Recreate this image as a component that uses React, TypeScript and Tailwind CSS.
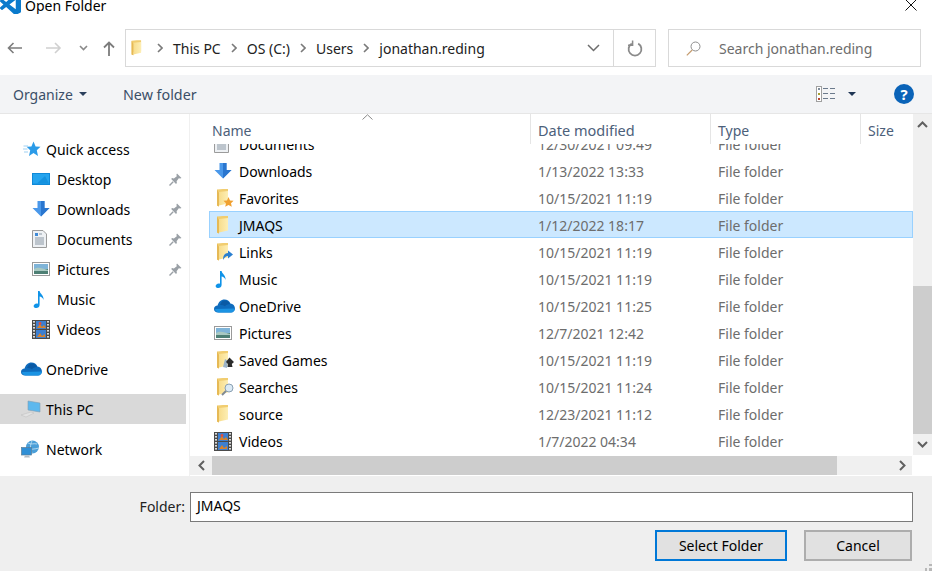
import type { ReactNode } from "react";

const font = { fontFamily: '"Noto Sans", "Open Sans", sans-serif' };

function FolderIcon({ overlay }: { overlay?: ReactNode }) {
  return (
    <svg width="22" height="20" viewBox="0 0 22 20">
      <defs>
        <linearGradient id="folderFront" x1="0" y1="0" x2="1" y2="0">
          <stop offset="0" stopColor="#f8dd8c" />
          <stop offset="1" stopColor="#fdeeb4" />
        </linearGradient>
      </defs>
      <path d="M3 1.5 L9 1 L14 1 L14 14 L5 15 L5 18.5 L3 17.5 Z" fill="#f1cd70" />
      <path d="M5 4 L14 3 L14 15.5 L5 17.5 Z" fill="url(#folderFront)" />
      <path d="M3 1.5 L3 17.5 L5 18.5 L5 5 Z" fill="#e6b955" />
      {overlay}
    </svg>
  );
}

function DownloadIcon() {
  return (
    <svg width="18" height="18" viewBox="0 0 18 18">
      <path d="M5.5 1 H12.5 V8 H17.5 L9 16.5 L0.5 8 H5.5 Z" fill="#4a98ea" />
      <path d="M9 1 H12.5 V8 H17.5 L9 16.5 Z" fill="#2a76cf" />
    </svg>
  );
}

function MusicIcon() {
  return (
    <svg width="14" height="19" viewBox="0 0 14 19">
      <path d="M6 1 H7.6 C8 4 12 5 11.5 10 C11 8 9 6.8 7.6 6.6 V15 C7.6 17.2 5.5 18.4 3.5 18 C1.5 17.6 1 15.6 2.4 14.4 C3.4 13.5 5 13.3 6 13.8 Z" fill="#0f93e8" />
    </svg>
  );
}

function PicturesIcon() {
  return (
    <svg width="18" height="14" viewBox="0 0 18 14">
      <rect x="0.5" y="0.5" width="17" height="13" fill="#fff" stroke="#9a9a9a" />
      <rect x="2" y="2" width="14" height="5" fill="#7fb4d8" />
      <rect x="2" y="7" width="14" height="5" fill="#4d7f74" />
      <path d="M2 7 C6 4.5 10 6 16 8 V9 H2 Z" fill="#a9c9c2" />
    </svg>
  );
}

function VideosIcon() {
  return (
    <svg width="18" height="19" viewBox="0 0 18 19">
      <rect x="0" y="0" width="18" height="19" fill="#4a4a4a" />
      <rect x="4" y="1" width="10" height="8" fill="#3d7fd0" />
      <rect x="4" y="10" width="10" height="8" fill="#3d7fd0" />
      <path d="M5 8 L8 4 L10 7 L12 5 L14 8 Z M5 17 L8 13 L10 16 L13 14 V17 Z" fill="#d9822b" />
      <circle cx="8" cy="3.5" r="1.4" fill="#e34f3c" />
      {[1, 4, 7, 10, 13, 16].map((y) => (
        <g key={y}>
          <rect x="1" y={y} width="2" height="1.6" fill="#dcdcdc" />
          <rect x="15" y={y} width="2" height="1.6" fill="#dcdcdc" />
        </g>
      ))}
    </svg>
  );
}

function CloudIcon() {
  return (
    <svg width="21" height="14" viewBox="0 0 21 14">
      <path d="M4 13.5 C1.5 13.5 0 12 0 10 C0 8 1.6 6.6 3.6 6.6 C4.4 3 7 0.5 10.5 0.5 C13.2 0.5 15.4 2 16.4 4.6 C19 4.8 21 7 21 9.6 C21 12 19.2 13.5 17 13.5 Z" fill="#0f6cbd" />
      <path d="M6 6 C7 3 9 1.6 11 1.6 C13.5 1.6 15 3 16 5 C13.6 5 12 6 11 7.2 C9.6 6.2 7.8 5.8 6 6 Z" fill="#0a5aa5" />
      <path d="M5 13.5 C3 13.5 1 12 1 10 L21 9.6 C21 12 19 13.5 17 13.5 Z" fill="#1b93e3" />
    </svg>
  );
}

function PinIcon() {
  return (
    <svg width="13" height="13" viewBox="0 0 13 13">
      <path d="M8 0.5 L12.5 5 L11.2 5.6 L9.8 5.2 L7.6 8.2 L7.9 10 L7 10.9 L2.2 6 L3 5.1 L4.9 5.4 L7.8 3.2 L7.4 1.8 Z" fill="#9aa0a6" />
      <path d="M4.2 8.8 L0.5 12.5" stroke="#9aa0a6" strokeWidth="1.4" />
    </svg>
  );
}

function StarIcon() {
  return (
    <svg width="18" height="16" viewBox="0 0 18 16">
      <path d="M10.5 0.5 L12.6 5.4 L17.5 5.8 L13.8 9.2 L15 15 L10.5 12 L6 15 L7.2 9.2 L3.6 5.8 L8.4 5.4 Z" fill="#2b9be8" />
      <path d="M0.5 5 H5 M0 8 H4.5 M1 11 H5" stroke="#9fd0f2" strokeWidth="1" />
    </svg>
  );
}

function DesktopIcon() {
  return (
    <svg width="18" height="14" viewBox="0 0 18 14">
      <rect x="0" y="1" width="18" height="12" fill="#0f89d8" />
      <rect x="1" y="2" width="16" height="9.6" fill="#25a4ee" />
      <path d="M5 11.6 L13 4 L17 11.6 Z" fill="#1592df" />
    </svg>
  );
}

function DocumentsIcon() {
  return (
    <svg width="15" height="18" viewBox="0 0 15 18">
      <path d="M0.5 0.5 H11 L14.5 4 V17.5 H0.5 Z" fill="#eef1f4" stroke="#9b9b9b" />
      <path d="M3 3 H6 V6 H3 Z" fill="#3f8ad6" />
      <path d="M7 4 H10 M3 8 H12 M3 10 H12 M3 12 H12 M3 14 H12" stroke="#8b98a5" />
    </svg>
  );
}

function ThisPcIcon() {
  return (
    <svg width="20" height="18" viewBox="0 0 20 18">
      <path d="M7 1 L19 3 V12 L7 10 Z" fill="#5db8ee" stroke="#7f9db3" strokeWidth="0.6" />
      <path d="M0 15 L10 12 L13 13 L5 17 Z" fill="#e2e2e2" stroke="#bdbdbd" strokeWidth="0.5" />
    </svg>
  );
}

function NetworkIcon() {
  return (
    <svg width="19" height="19" viewBox="0 0 19 19">
      <circle cx="11.5" cy="7" r="6.5" fill="#4b9fd8" />
      <path d="M7 3 C10 5 13 3 16 4 M6 8 C9 10 14 9 18 8 M11 1 C9 5 9 9 11 13" stroke="#c8e4f5" strokeWidth="0.8" fill="none" />
      <rect x="0.5" y="7.5" width="10" height="7.5" fill="#2f8fd6" stroke="#5a7d96" strokeWidth="0.7" />
      <path d="M3 17.5 H9 L8 15.5 H4 Z" fill="#b3bcc3" />
    </svg>
  );
}

function Glyph({ d, w, h, color, sw = 1.5 }: { d: string; w: number; h: number; color: string; sw?: number }) {
  return (
    <svg width={w} height={h} viewBox={`0 0 ${w} ${h}`} className="shrink-0">
      <path d={d} fill="none" stroke={color} strokeWidth={sw} />
    </svg>
  );
}

function Crumb() {
  return <Glyph d="M1 1 L5 5 L1 9" w={6} h={10} color="#7a7a7a" sw={1.6} />;
}

const quickAccess: { label: string; icon: ReactNode; pinned?: boolean }[] = [
  { label: "Desktop", icon: <DesktopIcon />, pinned: true },
  { label: "Downloads", icon: <DownloadIcon />, pinned: true },
  { label: "Documents", icon: <DocumentsIcon />, pinned: true },
  { label: "Pictures", icon: <PicturesIcon />, pinned: true },
  { label: "Music", icon: <MusicIcon /> },
  { label: "Videos", icon: <VideosIcon /> },
];

const files: { name: string; date: string; icon: ReactNode; selected?: boolean }[] = [
  { name: "Documents", date: "12/30/2021 09:49", icon: <DocumentsIcon /> },
  { name: "Downloads", date: "1/13/2022 13:33", icon: <DownloadIcon /> },
  {
    name: "Favorites",
    date: "10/15/2021 11:19",
    icon: <FolderIcon overlay={<path d="M14.5 9 L16 12.4 L19.6 12.8 L17 15.2 L17.8 18.8 L14.5 17 L11.2 18.8 L12 15.2 L9.4 12.8 L13 12.4 Z" fill="#f0a030" />} />,
  },
  { name: "JMAQS", date: "1/12/2022 18:17", icon: <FolderIcon />, selected: true },
  {
    name: "Links",
    date: "10/15/2021 11:19",
    icon: <FolderIcon overlay={<path d="M9 18 C9 13 11 11 14 11 V8.5 L19 12.5 L14 16.5 V14 C12 14 10.5 15.5 9 18 Z" fill="#2a7fd0" />} />,
  },
  { name: "Music", date: "10/15/2021 11:19", icon: <MusicIcon /> },
  { name: "OneDrive", date: "10/15/2021 11:25", icon: <CloudIcon /> },
  { name: "Pictures", date: "12/7/2021 12:42", icon: <PicturesIcon /> },
  {
    name: "Saved Games",
    date: "10/15/2021 11:19",
    icon: <FolderIcon overlay={<><path d="M9 17 L11 9 L14 11 L13 18 Z" fill="#9db4c8" /><path d="M15.5 7.5 L20 12 L17.8 14 L18.5 17 L13.5 17 L14 14 L12 12 Z" fill="#2c2c2c" /></>} />,
  },
  {
    name: "Searches",
    date: "10/15/2021 11:24",
    icon: <FolderIcon overlay={<><circle cx="15" cy="11" r="4" fill="#dbeaf5" stroke="#8aa0b2" /><path d="M12 14 L8 18" stroke="#7f8a94" strokeWidth="2" /></>} />,
  },
  { name: "source", date: "12/23/2021 11:12", icon: <FolderIcon /> },
  { name: "Videos", date: "1/7/2022 04:34", icon: <VideosIcon /> },
];

export default function App() {
  return (
    <div style={font} className="flex h-[571px] w-[932px] flex-col overflow-hidden bg-white text-[14px] text-[#1a1a1a]">
      {/* Title bar, cut off by the crop */}
      <div className="flex h-[14px] shrink-0 items-center overflow-hidden">
        <svg width="21" height="21" viewBox="0 0 24 24" className="-mt-[6px] shrink-0">
          <path
            d="M23.15 2.587L18.21.21a1.494 1.494 0 0 0-1.705.29l-9.46 8.63-4.12-3.128a.999.999 0 0 0-1.276.057L.327 7.261A1 1 0 0 0 .326 8.74L3.899 12 .326 15.26a1 1 0 0 0 .001 1.479L1.65 17.94a.999.999 0 0 0 1.276.057l4.12-3.128 9.46 8.63a1.492 1.492 0 0 0 1.704.29l4.942-2.377A1.5 1.5 0 0 0 24 20.06V3.939a1.5 1.5 0 0 0-.85-1.352zm-5.146 14.861L10.826 12l7.178-5.448v10.896z"
            fill="#0a7acc"
          />
        </svg>
        <span className="ml-1 -mt-[2px] leading-none text-black">Open Folder</span>
        <svg width="12" height="12" viewBox="0 0 12 12" className="ml-auto mr-[15px] -mt-[5px] shrink-0">
          <path d="M0.5 0.5 L11.5 11.5 M11.5 0.5 L0.5 11.5" stroke="#111" strokeWidth="1" />
        </svg>
      </div>

      {/* Navigation row */}
      <div className="flex h-[61px] shrink-0 items-center pb-[8px] pt-[15px]">
        <div className="ml-[7px] flex w-[118px] shrink-0 items-center">
          <Glyph d="M15 6 H1.5 M6.5 1 L1.5 6 L6.5 11" w={16} h={12} color="#7c7c7c" sw={1.6} />
          <div className="ml-[23px]">
            <Glyph d="M0 6 H14 M9 1 L14 6 L9 11" w={16} h={12} color="#d0d0d0" sw={1.6} />
          </div>
          <div className="ml-[17px]">
            <Glyph d="M1 1 L4.5 4.5 L8 1" w={9} h={6} color="#8a8a8a" sw={1.6} />
          </div>
          <div className="ml-[15px]">
            <Glyph d="M6 15 V1.5 M1 6.5 L6 1.5 L11 6.5" w={12} h={15} color="#7c7c7c" sw={1.8} />
          </div>
        </div>
        <div className="flex h-[38px] w-[531px] shrink-0 items-center border border-[#d9d9d9]">
          <div className="ml-[3px] flex w-[19px] items-center">
            <FolderIcon />
          </div>
          <div className="ml-[9px] flex items-center gap-[10px] text-[#222]">
            <Crumb />
            <span>This PC</span>
            <Crumb />
            <span>OS (C:)</span>
            <Crumb />
            <span>Users</span>
            <Crumb />
            <span>jonathan.reding</span>
          </div>
          <div className="ml-auto flex h-full items-center">
            <Glyph d="M1 1 L6.5 6.5 L12 1" w={13} h={8} color="#6d6d6d" sw={1.5} />
            <div className="ml-[13px] flex h-full w-[42px] items-center justify-center border-l border-[#d9d9d9]">
              <svg width="16" height="17" viewBox="0 0 16 17">
                <path d="M4.8 3.6 A6.4 6.4 0 1 0 11.2 3.6" fill="none" stroke="#8a8a8a" strokeWidth="1.8" />
                <path d="M5.6 0.6 V5.2 H1" fill="none" stroke="#8a8a8a" strokeWidth="1.5" />
              </svg>
            </div>
          </div>
        </div>
        <div className="ml-[12px] flex h-[38px] w-[253px] shrink-0 items-center border border-[#d9d9d9] pl-[17px] text-[#6d6d6d]">
          <svg width="15" height="15" viewBox="0 0 15 15" className="shrink-0">
            <circle cx="9.5" cy="5.5" r="4.5" fill="none" stroke="#8e8e8e" />
            <path d="M6.2 9 L0.8 14.4" stroke="#c49a6c" strokeWidth="1.2" />
          </svg>
          <span className="ml-[18px]">Search jonathan.reding</span>
        </div>
      </div>

      {/* Toolbar */}
      <div className="flex h-[39px] shrink-0 items-center border-b border-[#e6e6e6] bg-[#f3f4f6] text-[#3b4f68]">
        <span className="ml-[13px] w-[60px]">Organize</span>
        <svg width="8" height="4" viewBox="0 0 8 4" className="ml-[6px] shrink-0">
          <path d="M0 0 H8 L4 4 Z" fill="#2a3f5c" />
        </svg>
        <span className="ml-[36px] pt-[2px] text-[14.3px]">New folder</span>
        <div className="ml-auto flex items-center">
          <svg width="19" height="16" viewBox="0 0 19 16" className="shrink-0">
            <rect x="0.5" y="0.5" width="5" height="15" fill="#fff" stroke="#a0a0a0" />
            <rect x="2" y="2" width="2" height="2" fill="#7f8c9a" />
            <rect x="2" y="7" width="2" height="2" fill="#a8a030" />
            <rect x="2" y="12" width="2" height="2" fill="#b8452f" />
            <path d="M7 2.5 H12 M14 2.5 H19 M7 7.5 H12 M14 7.5 H19 M7 12.5 H12 M14 12.5 H19" stroke="#6b7a8c" />
          </svg>
          <svg width="8" height="4" viewBox="0 0 8 4" className="ml-[13px] shrink-0">
            <path d="M0 0 H8 L4 4 Z" fill="#1f3554" />
          </svg>
          <div className="ml-[38px] mr-[18px] flex h-[20px] w-[20px] items-center justify-center rounded-full bg-[#0a63b8] text-[15px] font-bold text-white">
            ?
          </div>
        </div>
      </div>

      {/* Main */}
      <div className="flex h-[362px] shrink-0">
        <aside className="w-[186px] shrink-0 pt-[20px] text-black">
          <div className="flex h-[30px] items-center pl-[23px]">
            <div className="flex w-[23px] shrink-0"><StarIcon /></div>
            <span>Quick access</span>
          </div>
          {quickAccess.map((item) => (
            <div key={item.label} className="flex h-[30px] items-center pl-[32px]">
              <div className="flex w-[25px] shrink-0 justify-start">{item.icon}</div>
              <span>{item.label}</span>
              {item.pinned && (
                <div className="ml-auto mr-[4px] flex">
                  <PinIcon />
                </div>
              )}
            </div>
          ))}
          <div className="mt-[10px] flex h-[30px] items-center pl-[21px]">
            <div className="flex w-[25px] shrink-0"><CloudIcon /></div>
            <span>OneDrive</span>
          </div>
          <div className="mt-[10px] flex h-[30px] items-center bg-[#d9d9d9] pl-[21px]">
            <div className="flex w-[25px] shrink-0"><ThisPcIcon /></div>
            <span>This PC</span>
          </div>
          <div className="mt-[10px] flex h-[30px] items-center pl-[21px]">
            <div className="flex w-[25px] shrink-0"><NetworkIcon /></div>
            <span>Network</span>
          </div>
        </aside>
        <div className="w-[4px] shrink-0 border-r border-[#f0f0f0]" />

        <div className="flex min-w-0 flex-1 flex-col">
          <div className="flex h-[341px] shrink-0">
            <div className="flex w-[723px] shrink-0 flex-col">
              {/* Column headers */}
              <div className="relative flex h-[30px] shrink-0 text-[#4c607a]">
                <svg width="11" height="6" viewBox="0 0 11 6" className="absolute left-[172px] top-0">
                  <path d="M0.5 5.5 L5.5 0.8 L10.5 5.5" fill="none" stroke="#8a8a8a" />
                </svg>
                <div className="flex w-[341px] shrink-0 items-center border-r border-[#e5e5e5] pl-[22px] pt-[3px]">Name</div>
                <div className="flex w-[180px] shrink-0 items-center border-r border-[#e5e5e5] pl-[7px] pt-[3px] text-[14.5px]">Date modified</div>
                <div className="flex w-[150px] shrink-0 items-center border-r border-[#e5e5e5] pl-[7px] pt-[3px]">Type</div>
                <div className="flex flex-1 items-center pl-[7px] pt-[3px]">Size</div>
              </div>
              {/* Rows, scrolled so the first one is half hidden */}
              <div className="min-h-0 flex-1 overflow-hidden">
                <div className="-mt-[14px]">
                  {files.map((f) => (
                    <div
                      key={f.name}
                      className={`ml-[19px] flex h-[27px] items-center border pt-[1px] ${
                        f.selected ? "border-[#99d1ff] bg-[#cce8ff]" : "border-transparent"
                      }`}
                    >
                      <div className="ml-[4px] flex w-[25px] shrink-0">{f.icon}</div>
                      <span className="w-[299px] shrink-0 pt-[1px] text-black">{f.name}</span>
                      <span className="w-[180px] shrink-0 pt-[1px] text-[#6d6d6d]">{f.date}</span>
                      <span className="pt-[1px] text-[#6d6d6d]">File folder</span>
                    </div>
                  ))}
                </div>
              </div>
            </div>

            {/* Vertical scrollbar */}
            <div className="flex flex-1 flex-col bg-[#f0f0f0]">
              <div className="flex h-[172px] shrink-0 justify-center pt-[6px]">
                <Glyph d="M1 7 L5.5 2.5 L10 7" w={11} h={9} color="#606060" sw={2} />
              </div>
              <div className="h-[148px] shrink-0 bg-[#cdcdcd]" />
              <div className="flex flex-1 items-center justify-center">
                <Glyph d="M1 2 L5.5 6.5 L10 2" w={11} h={9} color="#606060" sw={2} />
              </div>
            </div>
          </div>

          {/* Horizontal scrollbar */}
          <div className="mt-[1px] flex h-[19px] shrink-0">
            <div className="flex w-[22px] shrink-0 items-center justify-center bg-[#f0f0f0]">
              <Glyph d="M7 1 L2.5 5.5 L7 10" w={9} h={11} color="#606060" sw={2} />
            </div>
            <div className="w-[625px] shrink-0 bg-[#cdcdcd]" />
            <div className="flex w-[75px] shrink-0 items-center justify-end bg-[#f0f0f0] pr-[5px]">
              <Glyph d="M2 1 L6.5 5.5 L2 10" w={9} h={11} color="#606060" sw={2} />
            </div>
          </div>
        </div>
      </div>

      {/* Folder input and buttons */}
      <div className="relative flex min-h-0 flex-1 flex-col bg-[#efefef]">
        <div className="mt-[16px] flex h-[30px] shrink-0 items-center">
          <span className="w-[185px] shrink-0 pb-[2px] text-right text-[#222]">Folder:</span>
          <div className="ml-[5px] flex h-[30px] w-[723px] shrink-0 items-center border border-[#7a7a7a] bg-white pb-[4px] pl-[6px] text-black">
            JMAQS
          </div>
        </div>
        <div className="mt-[8px] flex h-[31px] shrink-0 justify-end pr-[20px] text-black">
          <div className="flex w-[132px] items-center justify-center border-2 border-[#0078d7] bg-[#e1e1e1]">Select Folder</div>
          <div className="ml-[17px] flex w-[108px] items-center justify-center border-2 border-[#adadad] bg-[#e1e1e1]">Cancel</div>
        </div>
        <svg width="8" height="8" viewBox="0 0 8 8" className="absolute bottom-0 right-0">
          <path d="M5 1 H8 V3 H5 Z M1 5 H3 V8 H1 Z M5 5 H8 V8 H5 Z" fill="#b8b8b8" />
        </svg>
      </div>
    </div>
  );
}
